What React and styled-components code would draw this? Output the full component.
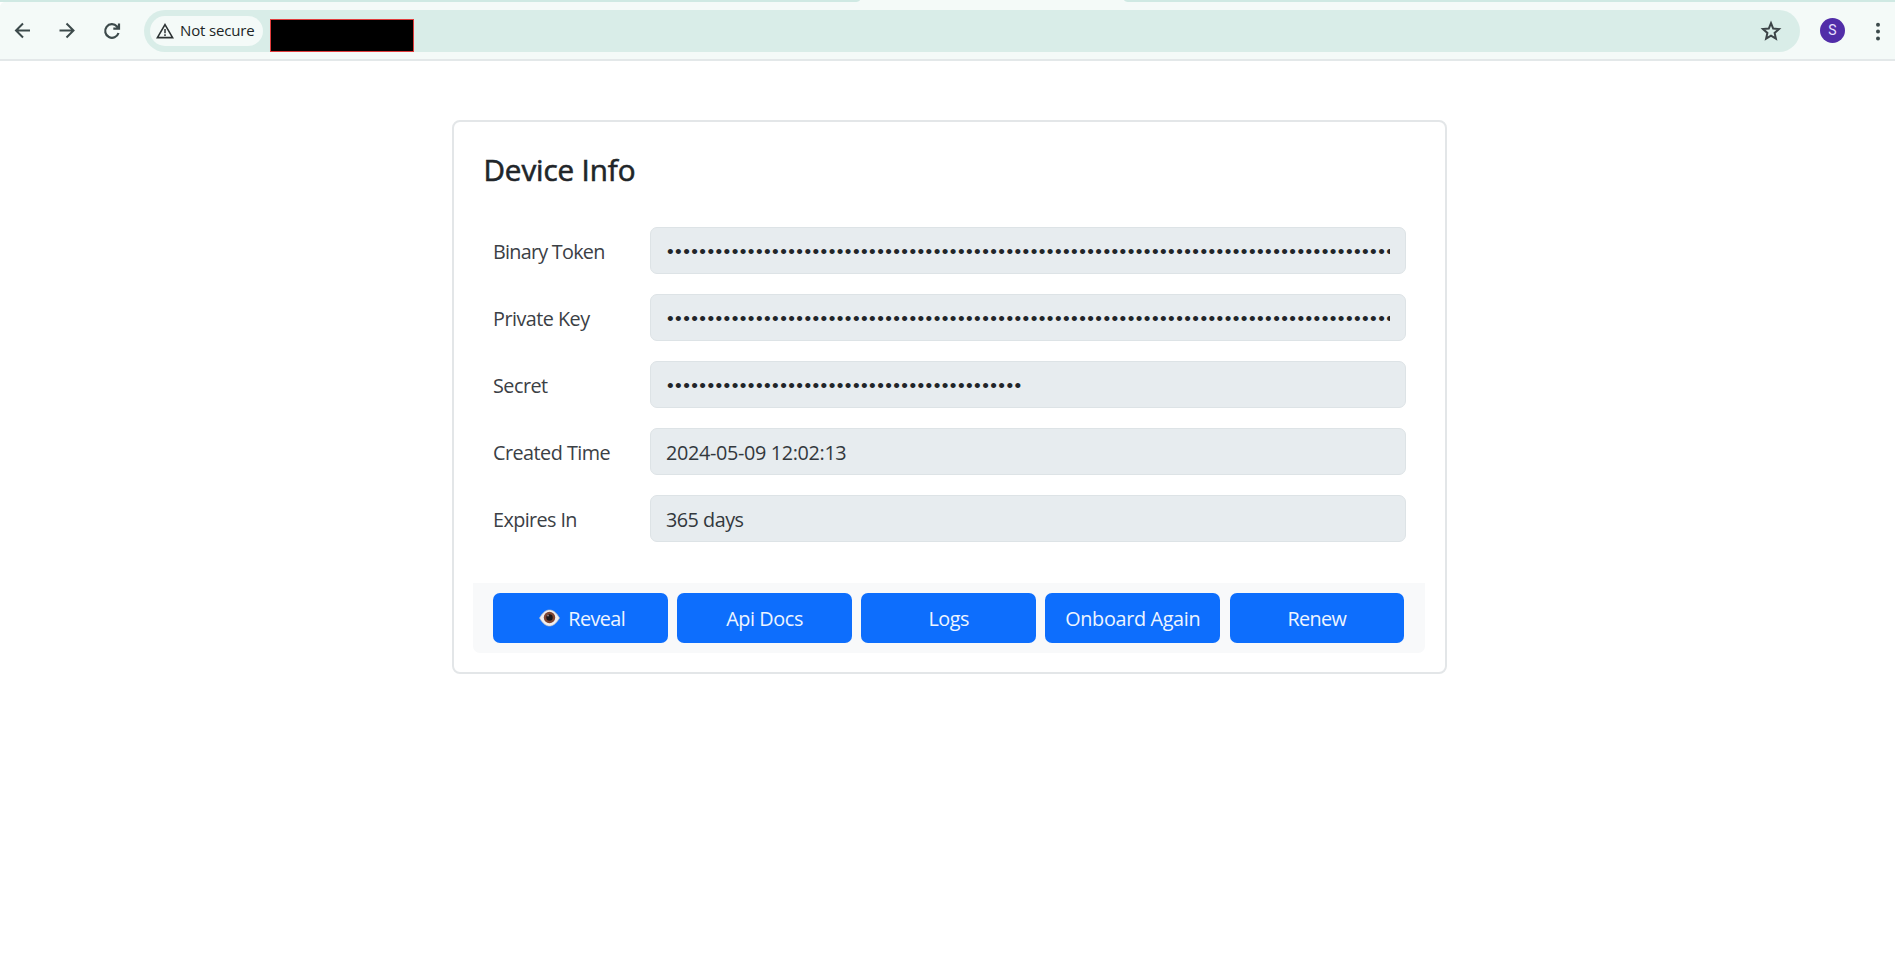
import React from "react";
import styled, { createGlobalStyle } from "styled-components";

const Global = createGlobalStyle`
  * { box-sizing: border-box; }
  body { margin: 0; background: #fff; color: #212529; font-family: "Segoe UI", "Open Sans", "Noto Sans", sans-serif; overflow: hidden; }
`;
const Page = styled.div`height: 963px; display: flex; flex-direction: column;`;
const TabStrip = styled.div`
  height: 2px; display: flex; justify-content: space-between; background: #f4faf8;
  flex: none;
`;
const TabEdge = styled.div`
  width: ${(p) => p.$w}px; background: #cfe9e3;
  border-radius: ${(p) => (p.$left ? "0 0 6px 0 / 0 0 2px 0" : "0 0 0 6px / 0 0 0 2px")};
`;
const Toolbar = styled.header`
  height: 59px; flex: none; display: flex; align-items: flex-start; padding: 8px 0 0 11px;
  background: #f4faf8; border-bottom: 2px solid #e3e8e9;
  border-top-left-radius: 5px;
`;
const NavButton = styled.button`
  width: 24px; height: 24px; margin: 7px ${(p) => p.$gap}px 0 0; padding: 0; border: 0; background: none;
  svg { display: block; }
`;
const AddressBar = styled.div`
  width: 1656px; height: 42px; border-radius: 21px; background: #d9ede8;
  display: flex; align-items: flex-start; padding: 6px 18px 0 6px;
`;
const Chip = styled.div`
  width: 113px; height: 30px; border-radius: 15px; background: #f4faf8; color: #202526;
  display: flex; align-items: center; padding: 0 0 2px 6px; font-size: 15px; letter-spacing: -0.15px; white-space: nowrap;
  svg { margin: 2px 6px 0 0; flex: none; }
`;
const Redacted = styled.div`
  width: 144px; height: 33px; margin: 3px auto 0 6.5px; background: #000; border: 1px solid #e03c3c;
`;
const Star = styled.div`height: 22px; margin-top: 4px;`;
const Avatar = styled.div`
  width: 25px; height: 25px; margin: 8px 0 0 20px; border-radius: 50%; background: #512da8; color: #e9e0ff;
  font: 14px/25px Roboto, sans-serif; text-align: center;
`;
const Menu = styled.div`margin: 11px 0 0 29.5px; height: 20px;`;

const Card = styled.main`
  width: 995px; height: 554px; margin: 59px 0 0 452px; padding: 28px 20px 0 19px; flex: none;
  border: 2px solid #e3e6e8; border-radius: 8px;
`;
const Title = styled.h1`
  margin: 0 0 0 10.5px; height: 77px; font-size: 29.6px; line-height: 40px; font-weight: 400;
  letter-spacing: -0.1px; -webkit-text-stroke: 0.6px #212529;
`;
const Row = styled.label`
  display: flex; height: 47px; margin: 0 0 20.1px 20px; line-height: 47px; font-size: 19.8px; color: #3b4045;
`;
const Label = styled.span`width: 157px; flex: none; padding-top: 1px; white-space: nowrap; letter-spacing: ${(p) => p.$ls}px;`;
const Field = styled.span`
  display: block; width: 756px; height: 47px; line-height: 45px; padding: 0 15px; border: 1px solid #dde3e6; border-radius: 7px;
  background: #e7ecef; color: #33383d;
`;
const Value = styled.span`display: block; padding-top: 1px; height: 45px; overflow: hidden; white-space: nowrap; letter-spacing: ${(p) => p.$ls}px;`;
const Dots = styled(Value)`
  padding-left: 1px; color: #212529; font-family: "Liberation Sans", sans-serif; font-size: 19px; letter-spacing: 1.43px;
`;
const Actions = styled.footer`
  display: flex; gap: 9.5px; height: 70px; margin-top: 40.5px; padding: 10px 0 0 20.2px; background: #f8f9fa; border-radius: 0 0 7px 7px;
`;
const Button = styled.button`
  width: 174.6px; height: 50px; padding: 1px 0 0; border: 0; border-radius: 7px; background: #0d6efd; color: #eef5ff;
  font: 19.8px "Segoe UI", "Open Sans", "Noto Sans", sans-serif; letter-spacing: ${(p) => p.$ls}px;
  display: flex; align-items: center; justify-content: center; white-space: nowrap;
  svg { margin: 0 8.5px 0 3px; flex: none; }
`;

const Back = () => (
  <svg width="24" height="24" viewBox="0 0 24 24" fill="none" stroke="#3c4a4b" strokeWidth="2"><path d="M19 13.5H5.5M12 6.5l-7 7 7 7" /></svg>
);
const Forward = () => (
  <svg width="24" height="24" viewBox="0 0 24 24" fill="none" stroke="#3c4a4b" strokeWidth="2"><path d="M4.500 13.500H18M11.500 6.500l7 7-7 7" /></svg>
);
const Reload = () => (
  <svg width="24" height="24" viewBox="0 0 24 24" fill="none" stroke="#3c4a4b" strokeWidth="2.200"><path d="M18.500 16A6.800 6.800 0 1 1 17 9.400l1.600 1.700M19 6.400V11.700h-5.700" /></svg>
);
const Warning = () => (
  <svg width="18" height="16" viewBox="0 0 18 16"><path d="M9 1.600 16.600 14.600H1.400Z" fill="none" stroke="#2c3233" strokeWidth="1.600" /><path d="M9 6v4.200M9 11.300v1.700" stroke="#2c3233" strokeWidth="1.500" /></svg>
);
const Eye = () => (
  <svg width="21" height="18" viewBox="0 0 21 18">
    <path d="M.5 9C4 3.200 7 1 10.500 1S17 3.200 20.500 9C17 14.800 14 17 10.500 17S4 14.800.5 9Z" fill="#f1eeee" stroke="#b9bcc6" strokeWidth=".7" />
    <circle cx="10.500" cy="8.500" r="5.700" fill="#7d4533" /><circle cx="10.500" cy="8.500" r="3.200" fill="#1c1718" /><circle cx="9" cy="6.500" r="1" fill="#8c7a77" />
  </svg>
);

const rows = [
  { label: "Binary Token", ls: -0.74, dots: 90 },
  { label: "Private Key", ls: -0.52, dots: 90 },
  { label: "Secret", ls: -0.5, dots: 44 },
  { label: "Created Time", ls: -0.52, value: "2024-05-09 12:02:13", vls: -0.33 },
  { label: "Expires In", ls: -0.6, value: "365 days", vls: -0.5 },
];
const actions = [["Reveal", -0.55], ["Api Docs", -0.4], ["Logs", -0.5], ["Onboard Again", -0.32], ["Renew", -0.6]];

export default function App() {
  return (
    <Page>
      <Global />
      <TabStrip><TabEdge $w={860} $left /><TabEdge $w={771} /></TabStrip>
      <Toolbar>
        <NavButton $gap={20} aria-label="Back"><Back /></NavButton>
        <NavButton $gap={21} aria-label="Forward"><Forward /></NavButton>
        <NavButton $gap={20} aria-label="Reload"><Reload /></NavButton>
        <AddressBar>
          <Chip><Warning />Not secure</Chip>
          <Redacted />
          <Star>
            <svg width="22" height="22" viewBox="0 0 22 22"><path d="M11 3.200 13.200 8.600 19 9.100 14.600 12.900 15.900 18.600 11 15.600 6.100 18.600 7.400 12.900 3 9.100 8.800 8.600Z" fill="none" stroke="#3c4447" strokeWidth="2" /></svg>
          </Star>
        </AddressBar>
        <Avatar>S</Avatar>
        <Menu><svg width="6" height="20" viewBox="0 0 6 20" fill="#3c4a4b"><circle cx="3" cy="3.800" r="2" /><circle cx="3" cy="10.600" r="2" /><circle cx="3" cy="17.400" r="2" /></svg></Menu>
      </Toolbar>
      <Card>
        <Title>Device Info</Title>
        {rows.map((r) => (
          <Row key={r.label}>
            <Label $ls={r.ls}>{r.label}</Label>
            <Field>{r.dots ? <Dots>{"•".repeat(r.dots)}</Dots> : <Value $ls={r.vls}>{r.value}</Value>}</Field>
          </Row>
        ))}
        <Actions>
          {actions.map(([name, ls]) => (
            <Button key={name} $ls={ls}>{name === "Reveal" && <Eye />}{name}</Button>
          ))}
        </Actions>
      </Card>
    </Page>
  );
}
